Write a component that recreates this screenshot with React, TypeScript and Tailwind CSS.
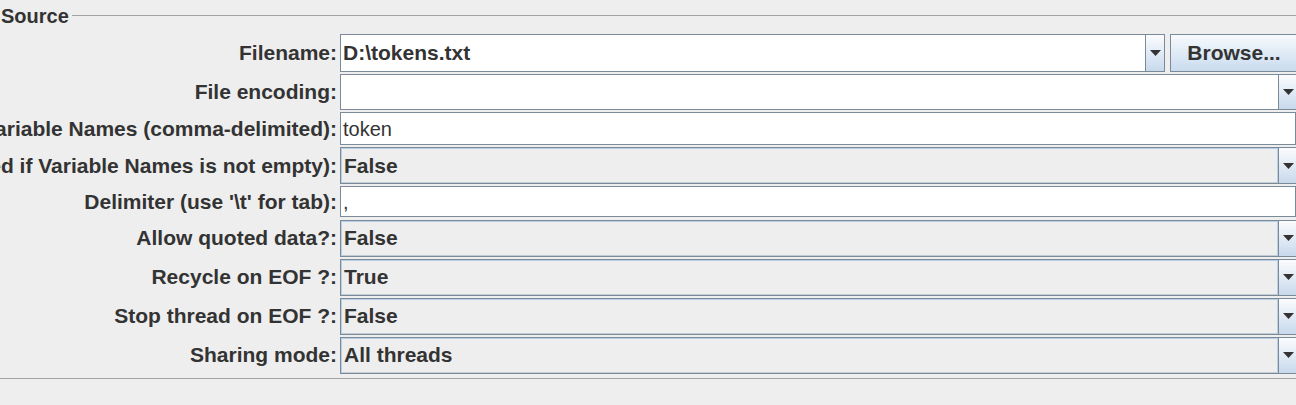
const labelCls =
  "w-[340px] shrink-0 flex justify-end items-center pr-[3px] overflow-hidden whitespace-nowrap font-bold text-[21px] text-[#333333]";

const Arrow = () => (
  <svg width="11" height="6" viewBox="0 0 11 6">
    <path d="M0 0 H11 L5.5 6 Z" fill="#333333" />
  </svg>
);

const Combo = ({
  value,
  editable,
  height,
}: {
  value: string;
  editable?: boolean;
  height: string;
}) => (
  <div className={`flex-1 flex border border-[#7a8a99] ${height}`}>
    <div
      className={
        editable
          ? "flex-1 flex items-center pl-[2px] bg-white font-bold text-[21px] text-[#333333] whitespace-nowrap"
          : "flex-1 flex items-center pl-[2px] bg-[#eeeeee] border border-[#b8cfe5] border-b-[#c4cdd6] font-bold text-[21px] text-[#333333] whitespace-nowrap"
      }
    >
      {value}
    </div>
    <div className="w-[19px] shrink-0 flex items-center justify-center border-l border-[#7a8a99] bg-gradient-to-b from-[#fbfcfe] to-[#c8d9ec]">
      <Arrow />
    </div>
  </div>
);

const TextField = ({ value, height }: { value: string; height: string }) => (
  <div className="flex-1 pr-[2px] flex">
    <div
      className={`flex-1 flex items-center pl-[2px] bg-white border border-[#7a8a99] text-[20px] text-[#333333] whitespace-nowrap ${height}`}
    >
      {value}
    </div>
  </div>
);

const Row = ({ label, children }: { label: string; children: React.ReactNode }) => (
  <div className="flex">
    <div className={labelCls}>{label}</div>
    {children}
  </div>
);

const App = () => {
  return (
    <div
      className="w-[1296px] h-[405px] bg-[#eeeeee] overflow-hidden"
      style={{ fontFamily: '"Liberation Sans", Arial, sans-serif' }}
    >
      <div className="w-[1298px]">
        <div className="flex items-center h-[34px] pb-[4px]">
          <span className="pl-[1px] mt-[2px] font-bold text-[20px] text-[#333333] leading-none">Source</span>
          <div className="flex-1 ml-[3px] border-t border-[#a3a3a3]" />
        </div>
        <div className="flex flex-col gap-[2px]">
          <Row label="Filename:">
            <div className="flex-1 flex gap-[5px] h-[38px]">
              <Combo value="D:\tokens.txt" editable height="h-[38px]" />
              <button className="w-[128px] shrink-0 h-[38px] border border-[#7a8a99] bg-gradient-to-b from-[#f7fafd] to-[#c9dbee] font-bold text-[21px] text-[#333333]">
                Browse...
              </button>
            </div>
          </Row>
          <Row label="File encoding:">
            <Combo value="" editable height="h-[36px]" />
          </Row>
          <Row label="Variable Names (comma-delimited):">
            <TextField value="token" height="h-[33px]" />
          </Row>
          <Row label="Ignore first line (only used if Variable Names is not empty):">
            <Combo value="False" height="h-[37px]" />
          </Row>
          <Row label="Delimiter (use '\t' for tab):">
            <TextField value="," height="h-[31px]" />
          </Row>
          <Row label="Allow quoted data?:">
            <Combo value="False" height="h-[37px]" />
          </Row>
          <Row label="Recycle on EOF ?:">
            <Combo value="True" height="h-[37px]" />
          </Row>
          <Row label="Stop thread on EOF ?:">
            <Combo value="False" height="h-[37px]" />
          </Row>
          <Row label="Sharing mode:">
            <Combo value="All threads" height="h-[37px]" />
          </Row>
        </div>
        <div className="mt-[4px] border-t border-[#a3a3a3]" />
      </div>
    </div>
  );
};

export default App;
